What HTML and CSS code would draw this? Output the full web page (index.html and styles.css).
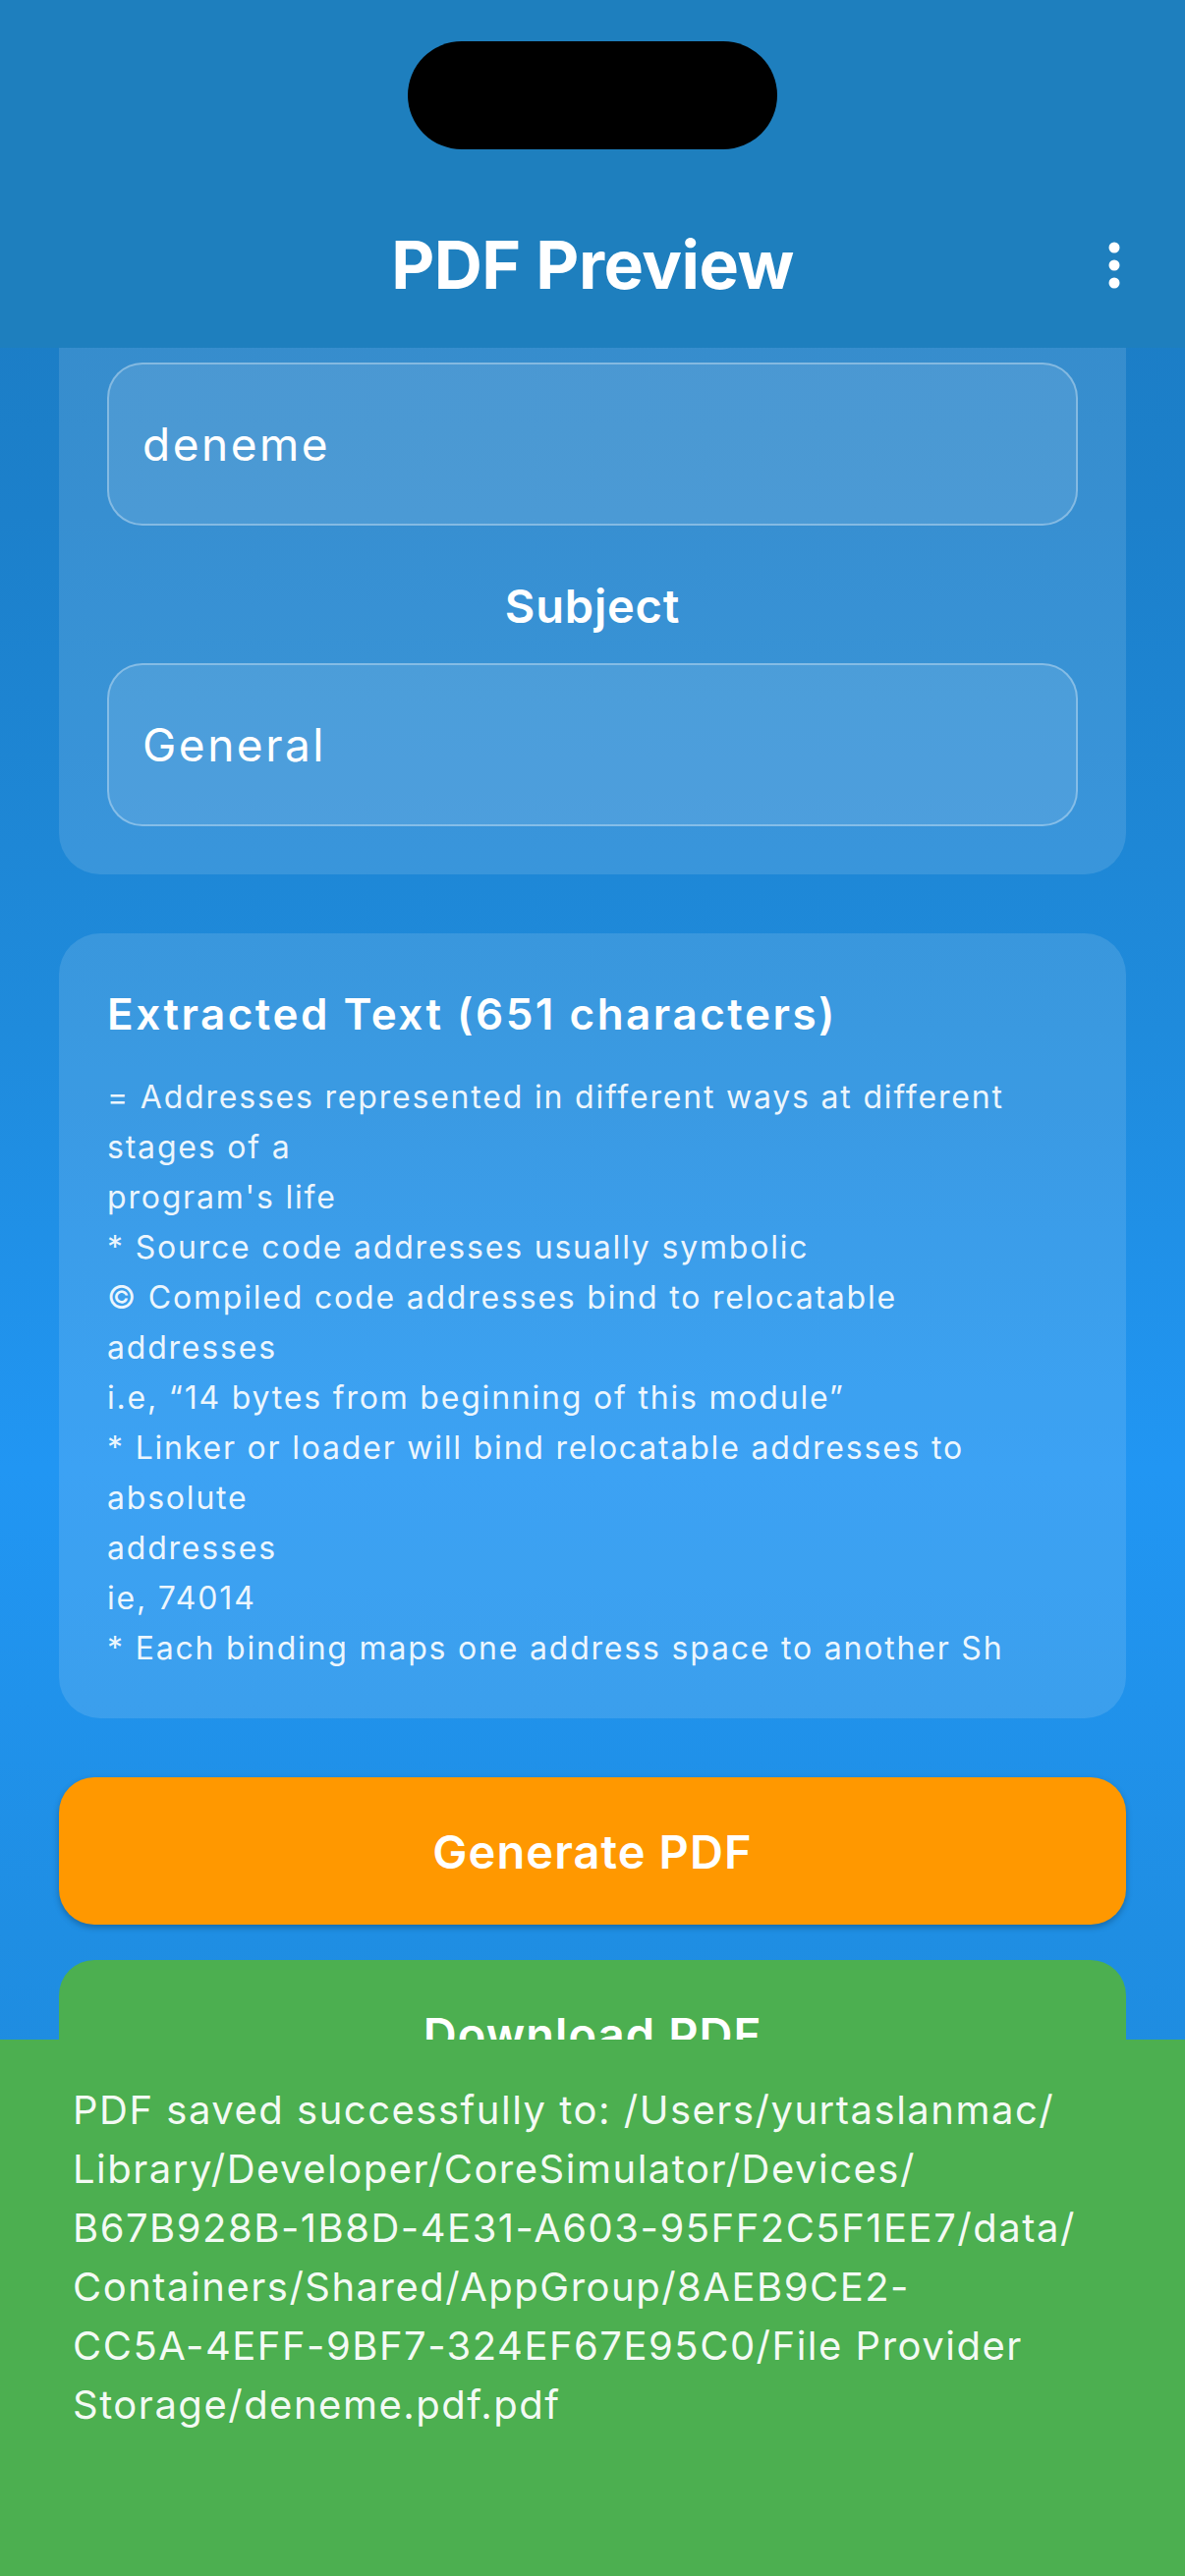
FILE: index.html
```html
<!DOCTYPE html>
<html lang="en">
<head>
<meta charset="utf-8">
<title>PDF Preview</title>
<link rel="stylesheet" href="styles.css">
</head>
<body>
<div class="notch"></div>
<header class="appbar">
  <div class="toolbar">
    <h1 class="title">PDF Preview</h1>
    <div class="menu">
      <svg width="12" height="48" viewBox="0 0 12 48"><circle cx="6" cy="6" r="5.5" fill="#fff"/><circle cx="6" cy="24" r="5.5" fill="#fff"/><circle cx="6" cy="42" r="5.5" fill="#fff"/></svg>
    </div>
  </div>
</header>
<main class="content">
  <section class="card card-top">
    <div class="field">deneme</div>
    <div class="label">Subject</div>
    <div class="field">General</div>
  </section>
  <section class="card card-text">
    <h2 class="card-title">Extracted Text (651 characters)</h2>
    <div class="body-text">
      <div class="line">= Addresses represented in different ways at different</div>
      <div class="line">stages of a</div>
      <div class="line">program's life</div>
      <div class="line">* Source code addresses usually symbolic</div>
      <div class="line">© Compiled code addresses bind to relocatable</div>
      <div class="line">addresses</div>
      <div class="line">i.e, “14 bytes from beginning of this module”</div>
      <div class="line">* Linker or loader will bind relocatable addresses to</div>
      <div class="line">absolute</div>
      <div class="line">addresses</div>
      <div class="line">ie, 74014</div>
      <div class="line">* Each binding maps one address space to another Sh</div>
    </div>
  </section>
  <div class="btn btn-orange">Generate PDF</div>
  <div class="btn btn-green">Download PDF</div>
</main>
<div class="snackbar">
  <div class="line">PDF saved successfully to: /Users/yurtaslanmac/</div>
  <div class="line">Library/Developer/CoreSimulator/Devices/</div>
  <div class="line">B67B928B-1B8D-4E31-A603-95FF2C5F1EE7/data/</div>
  <div class="line">Containers/Shared/AppGroup/8AEB9CE2-</div>
  <div class="line">CC5A-4EFF-9BF7-324EF67E95C0/File Provider</div>
  <div class="line">Storage/deneme.pdf.pdf</div>
</div>
</body>
</html>
```
FILE: styles.css
```css
* { box-sizing: border-box; }
html, body { margin: 0; padding: 0; }
body {
  width: 1206px;
  height: 2622px;
  overflow: hidden;
  position: relative;
  font-family: Inter, "Noto Sans", sans-serif;
  color: #fff;
  background: linear-gradient(180deg, #1B7ABF 0%, #1C80CB 20%, #1F8BDC 40%, #2196F3 57%, #1F8EE3 75%, #1D86D6 100%);
}
.notch {
  position: absolute;
  left: 415px;
  top: 42px;
  width: 376px;
  height: 110px;
  border-radius: 55px;
  background: #000;
}
.appbar {
  height: 354px;
  background: #1E7FBE;
  display: flex;
  flex-direction: column;
  justify-content: flex-end;
}
.toolbar {
  height: 168px;
  display: grid;
  grid-template-columns: 1fr auto 1fr;
  align-items: center;
}
.title {
  grid-column: 2;
  margin: -3px 0 0;
  font-size: 68px;
  font-weight: 700;
  line-height: 1;
  letter-spacing: -0.5px;
}
.menu {
  grid-column: 3;
  justify-self: end;
  width: 72px;
  height: 72px;
  margin-right: 36px;
  display: flex;
  align-items: center;
  justify-content: center;
}
.content {
  padding: 0 60px;
  display: flex;
  flex-direction: column;
}
.card {
  background: rgba(255, 255, 255, 0.12);
  border-radius: 42px;
}
.card-top {
  border-radius: 0 0 42px 42px;
  padding: 15px 49px 49px;
}
.field {
  height: 166px;
  border: 2px solid rgba(255, 255, 255, 0.32);
  border-radius: 36px;
  background: rgba(255, 255, 255, 0.1);
  display: flex;
  align-items: center;
  padding-left: 34px;
  font-size: 46px;
  letter-spacing: 2.5px;
}
.label {
  text-align: center;
  font-size: 47px;
  font-weight: 600;
  line-height: 1;
  letter-spacing: 0.8px;
  margin: 58px 0 35px;
}
.card-text {
  margin-top: 60px;
  padding: 60px 49px 46px;
}
.card-title {
  margin: 0;
  font-size: 44px;
  font-weight: 600;
  line-height: 1;
  letter-spacing: 2.5px;
}
.body-text {
  margin-top: 37px;
  font-size: 32px;
  line-height: 51px;
  letter-spacing: 1.8px;
  color: rgba(255, 255, 255, 0.92);
}
.line { white-space: nowrap; }
.btn {
  height: 150px;
  border-radius: 36px;
  display: flex;
  align-items: center;
  justify-content: center;
  font-size: 47px;
  font-weight: 600;
  letter-spacing: 1.1px;
}
.btn-orange {
  margin-top: 60px;
  background: #FF9800;
  box-shadow: 0 3px 6px rgba(0, 0, 0, 0.25);
}
.btn-green {
  margin-top: 36px;
  background: #4CAF50;
}
.snackbar {
  position: absolute;
  left: 0;
  right: 0;
  top: 2076px;
  bottom: 0;
  background: #4CAF50;
  padding: 42px 74px;
  font-size: 40px;
  line-height: 60px;
  letter-spacing: 1.5px;
  color: rgba(255, 255, 255, 0.94);
}
```
